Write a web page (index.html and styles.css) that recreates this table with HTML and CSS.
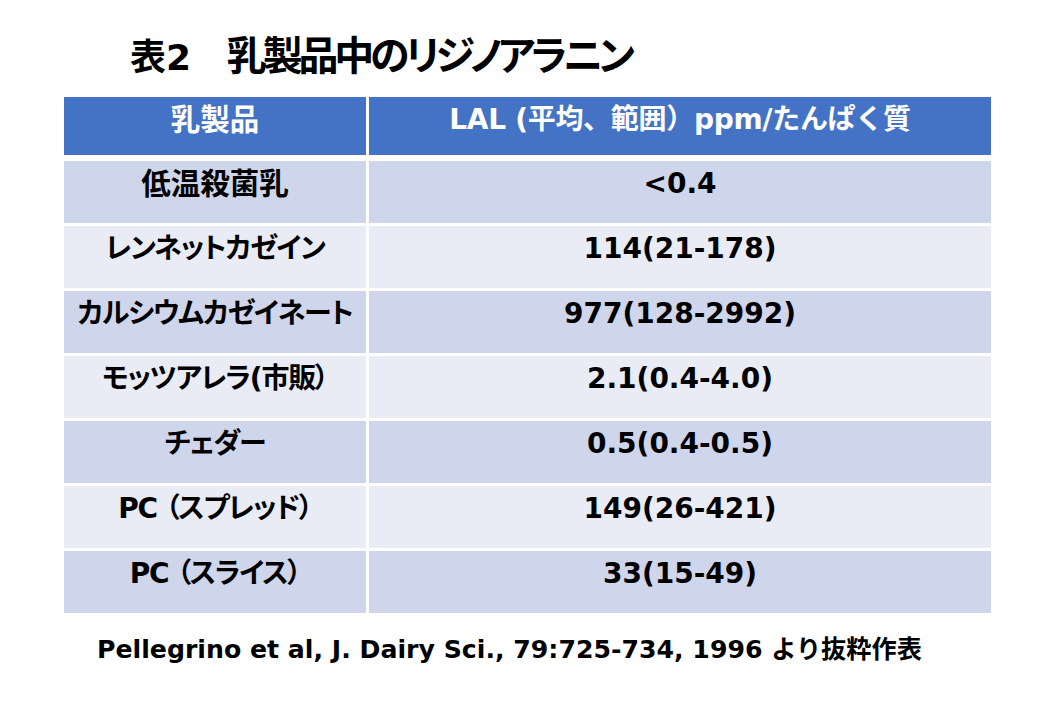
FILE: index.html
```html
<!DOCTYPE html>
<html lang="ja">
<head>
<meta charset="utf-8">
<title>表2 乳製品中のリジノアラニン</title>
<link rel="stylesheet" href="styles.css">
</head>
<body>
<div class="slide">
  <h1 class="title">表2<span class="j">　乳製品中のリジノアラニン</span></h1>
  <div class="table">
    <div class="cell head kanji">乳製品</div>
    <div class="cell head wide">LAL (平均、範囲）ppm/たんぱく質</div>

    <div class="cell odd kanji">低温殺菌乳</div>
    <div class="cell odd">&lt;0.4</div>

    <div class="cell even kana">レンネットカゼイン</div>
    <div class="cell even">114(21-178)</div>

    <div class="cell odd kana">カルシウムカゼイネート</div>
    <div class="cell odd">977(128-2992)</div>

    <div class="cell even kana">モッツアレラ(市販）</div>
    <div class="cell even">2.1(0.4-4.0)</div>

    <div class="cell odd kana">チェダー</div>
    <div class="cell odd">0.5(0.4-0.5)</div>

    <div class="cell even kana">PC （スプレッド）</div>
    <div class="cell even">149(26-421)</div>

    <div class="cell odd kana">PC （スライス）</div>
    <div class="cell odd">33(15-49)</div>
  </div>
  <p class="source">Pellegrino et al, J. Dairy Sci., 79:725-734, 1996 より抜粋作表</p>
</div>
</body>
</html>
```

FILE: styles.css
```css
html, body {
  margin: 0;
  padding: 0;
  background: #ffffff;
}

body {
  font-family: "DejaVu Sans", "Noto Sans CJK JP", sans-serif;
  font-weight: bold;
  color: #000000;
}

.slide {
  width: 1043px;
  height: 707px;
  overflow: hidden;
}

.title {
  margin: 37px 0 20px 130px;
  font-size: 36px;
  line-height: 38px;
  font-weight: bold;
  font-feature-settings: "palt";
}

.title .j {
  font-size: 40px;
  letter-spacing: -4.2px;
}

.table {
  margin-left: 64px;
  width: 927px;
  display: grid;
  grid-template-columns: 302px 622px;
  grid-template-rows: 61px repeat(7, 62px);
  column-gap: 3px;
  row-gap: 3px;
}

.cell {
  display: flex;
  align-items: center;
  justify-content: center;
  padding-bottom: 16px;
  box-sizing: border-box;
  font-size: 28px;
  line-height: 36px;
  white-space: nowrap;
}

.kana {
  font-feature-settings: "palt";
  letter-spacing: -1.2px;
}

.kanji {
  font-size: 29.5px;
}

.head {
  background: #4472c4;
  color: #ffffff;
  padding-bottom: 12px;
  margin-bottom: 3px;
}

.wide {
  letter-spacing: -0.3px;
}

.odd {
  background: #cfd5ea;
}

.even {
  background: #e9ebf5;
}

.source {
  margin: 22px 0 0 97px;
  font-size: 25.2px;
  line-height: 30px;
}
```
